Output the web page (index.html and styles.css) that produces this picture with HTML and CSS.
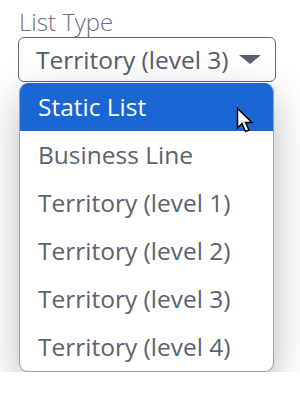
FILE: index.html
```html
<!DOCTYPE html>
<html lang="en">
<head>
  <meta charset="UTF-8">
  <title>List Type</title>
  <link rel="stylesheet" href="styles.css">
</head>
<body>

  <div class="field">
    <label class="field-label">List Type</label>
    <div class="select">
      <span class="select-value">Territory (level 3)</span>
      <span class="select-arrow"></span>
    </div>

    <ul class="menu">
      <li class="menu-item active">Static List
        <svg class="cursor" width="22" height="28" viewBox="0 0 22 28">
          <path d="M1.5 1.5 L1.5 21 L6 16.5 L9.5 24.5 L13 23 L9.5 15.5 L16 15.5 Z" fill="#fff" stroke="#000" stroke-width="1.5" stroke-linejoin="miter"/>
        </svg>
      </li>
      <li class="menu-item">Business Line</li>
      <li class="menu-item">Territory (level 1)</li>
      <li class="menu-item">Territory (level 2)</li>
      <li class="menu-item">Territory (level 3)</li>
      <li class="menu-item">Territory (level 4)</li>
    </ul>
  </div>

</body>
</html>
```

FILE: styles.css
```css
body {
  margin: 0;
  background: #fff;
  font-family: 'Open Sans', sans-serif;
}

.field {
  padding: 7px 0 0 18px;
  width: 258px;
}

.field-label {
  display: block;
  font-size: 24px;
  font-weight: 300;
  color: #6f6b80;
  line-height: 30px;
  padding-left: 1px;
}

.select {
  display: flex;
  align-items: center;
  justify-content: space-between;
  height: 43px;
  border: 1px solid #5f6872;
  border-radius: 6px;
  padding: 0 14px 0 17px;
  color: #525c66;
  font-size: 24.5px;
}

.select-arrow {
  width: 0;
  height: 0;
  border-left: 11px solid transparent;
  border-right: 11px solid transparent;
  border-top: 9px solid #56606a;
}

.menu {
  list-style: none;
  margin: 1px 0 0 1px;
  padding: 0;
  width: 253px;
  border: 1px solid #a0a0a0;
  border-top: none;
  border-radius: 9px;
  overflow: hidden;
  background: #fff;
  box-shadow: 0 14px 40px rgba(0, 0, 0, 0.28);
}

.menu-item {
  position: relative;
  height: 48px;
  line-height: 48px;
  padding-left: 18px;
  font-size: 24.5px;
  color: #59626d;
}

.menu-item.active {
  background: #1a66d2;
  color: #fff;
}

.cursor {
  position: absolute;
  left: 216px;
  top: 24px;
}
```
